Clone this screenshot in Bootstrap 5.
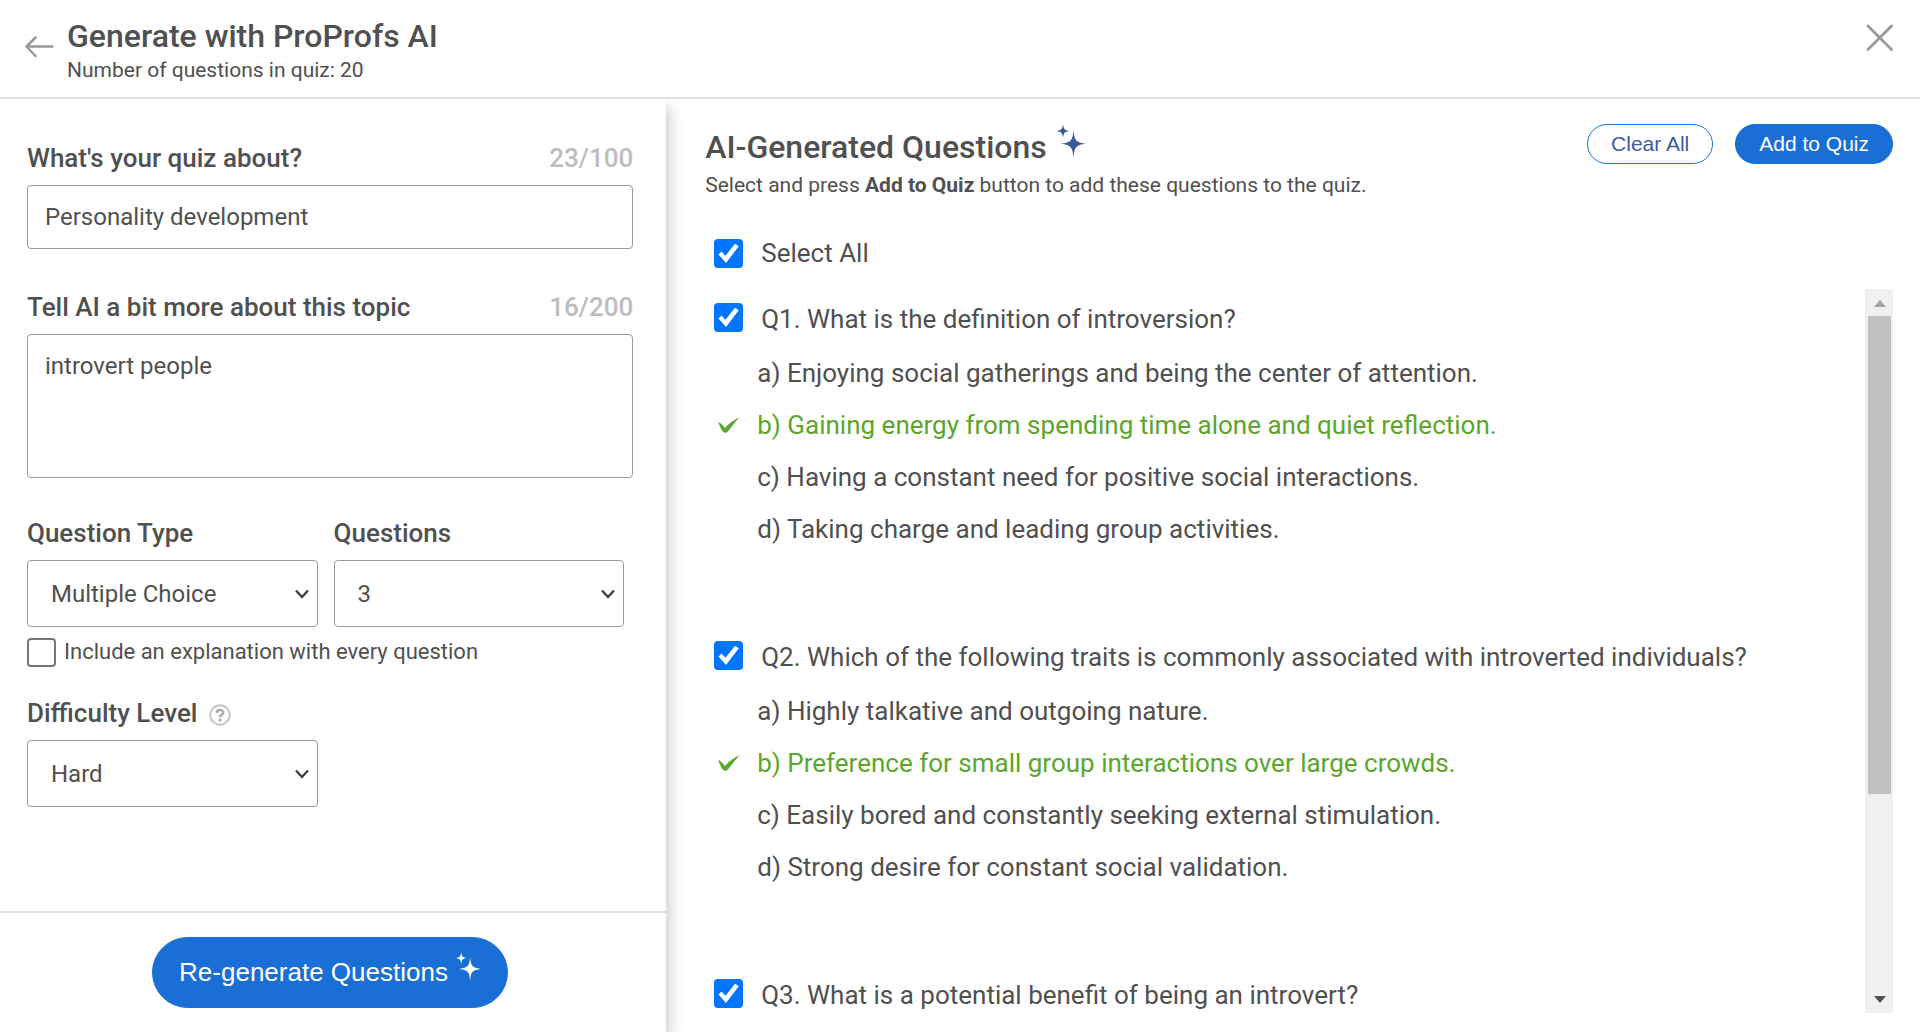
<!DOCTYPE html>
<html lang="en">
<head>
<meta charset="utf-8">
<meta name="viewport" content="width=device-width, initial-scale=1">
<title>Generate with ProProfs AI</title>
<link href="https://cdn.jsdelivr.net/npm/bootstrap@5.3.0/dist/css/bootstrap.min.css" rel="stylesheet">
<style>
  :root { --ink: #505050; --line: #e0e0e0; --edge: #999; --brand: #1a6fd6; --tick: #5ca62b; }
  body { font-family: Roboto, "Liberation Sans", sans-serif; color: var(--ink); background: #fff; }
  .top-bar { padding: 16px 27px 15px 24px; gap: 13px; border-bottom: 2px solid var(--line); height: 99px; }
  .page-title { font-size: 32px; line-height: 40px; font-weight: 500; }
  .sub-text { font-size: 21px; line-height: 28px; }
  .icon-btn { background: none; border: 0; padding: 0; line-height: 0; }
  .side-panel { width: 34.7%; box-shadow: 3px 8px 14px rgba(0,0,0,.22); }
  .side-form { padding: 44px 33px 0 27px; }
  .field-label, .counter { font-size: 26px; line-height: 30px; font-weight: 500; }
  .counter { color: #bdbdbd; }
  .label-row { margin-bottom: 12px; }
  .field { height: 64px; border: 1px solid var(--edge); border-radius: 4px; color: var(--ink); font-size: 24px; line-height: 30px; padding: 16px 17px; }
  .field.form-select { height: 67px; padding: 0 40px 0 23px;
    background: url("data:image/svg+xml,%3csvg xmlns='http://www.w3.org/2000/svg' viewBox='0 0 14 10'%3e%3cpath d='M1 1.5l6 6.5 6-6.5' fill='none' stroke='%23404040' stroke-width='2.4'/%3e%3c/svg%3e") no-repeat right 8px center / 14px 10px; }
  textarea.field { height: 144px; resize: none; }
  .form-block { margin-top: 43px; }
  .pair { display: grid; grid-template-columns: 1fr 1fr; column-gap: 16px; padding-right: 9px; }
  .explain-row { gap: 8px; margin-top: 10px; }
  .level-row { margin-top: 31px; }
  .tick { width: 29px; height: 29px; margin: 0; flex: none; border: 2px solid #767676; border-radius: 4px; }
  .tick:checked { background: #0075ff url("data:image/svg+xml,%3csvg xmlns='http://www.w3.org/2000/svg' viewBox='0 0 29 29'%3e%3cpath d='M4.500 15.500l3-3 4 4.300L21 4.800l3.800 2.400L12 24z' fill='%23fff'/%3e%3c/svg%3e") center / 100% 100%; background-origin: border-box; border-color: #0075ff; }
  .tick-label { font-size: 22px; line-height: 30px; }
  .side-foot { border-top: 2px solid var(--line); padding: 24px 33px 24px 27px; }
  .pill { font-family: "Liberation Sans", Arial, sans-serif; border-radius: 50px; border: 1px solid var(--brand); background: var(--brand); color: #fff; font-size: 21px; line-height: 38px; padding: 0 23px; }
  .pill-outline { background: #fff; color: #3f5a9d; }
  .pill-lg { font-size: 26px; line-height: 69px; padding: 0 26px; }
  .pill-lg svg { vertical-align: baseline; }
  .results { padding: 25px 27px 19px 39px; }
  .results-head { gap: 22px; }
  .results-title { gap: 9px; }
  .results-title span { padding-top: 3px; }
  .q-text { font-size: 26px; line-height: 32px; }
  .check-row { gap: 18px; padding-left: 9px; }
  .all-row { margin-top: 38px; }
  .q-scroll { margin-top: 20px; }
  .q-list { padding-top: 14px; }
  .q-item { margin-bottom: 86px; }
  .opts { margin: 12px 0 0; padding: 0 0 0 13px; }
  .opt { font-size: 26px; line-height: 52px; gap: 17px; }
  .opt-mark { width: 22px; flex: none; line-height: 0; }
  .opt.right { color: var(--tick); }
  .s-track { width: 28px; flex: none; background: #f0f0f0; padding: 11px 2px 10px 3px; }
  .s-thumb { height: 68%; background: #c1c1c1; margin: 9px 0 auto; }
</style>
</head>
<body>
<svg width="0" height="0" class="position-absolute" aria-hidden="true">
  <symbol id="sparkle" viewBox="0 0 30 34">
    <path d="M17.500 6C18.400 16 19.500 18.600 30 19.800C19.500 21 18.400 23.600 17.500 34C16.600 23.600 15.500 21 4.500 19.800C15.500 18.600 16.600 16 17.500 6Z"/>
    <path d="M7 0C7.700 5.300 8.500 6.300 13.500 7C8.500 7.700 7.700 8.700 7 14C6.300 8.700 5.500 7.700 0 7C5.500 6.300 6.300 5.300 7 0Z"/>
  </symbol>
  <symbol id="right-mark" viewBox="0 0 22 17">
    <path d="M.3 5C2.800 5.800 4.800 8.300 6.800 11C10.500 7 15.500 3 21.500 .3C17.500 4.500 14 9.500 9.800 14.600C8.600 16.200 5.900 16.200 4.900 14.800C3 12 1.300 8.500 .3 5Z"/>
  </symbol>
</svg>

<div class="vh-100 d-flex flex-column overflow-hidden">
  <header class="top-bar d-flex align-items-start">
    <button class="icon-btn mt-3 pt-1" type="button" aria-label="Back">
      <svg width="30" height="22" viewBox="0 0 30 22" fill="none" stroke="#999" stroke-width="2.500" stroke-linecap="round" stroke-linejoin="round"><path d="M11.500 1.500L2.500 10.500l9 9.500M2.500 10.500h26"/></svg>
    </button>
    <div class="flex-fill">
      <h1 class="page-title m-0">Generate with ProProfs AI</h1>
      <div class="sub-text">Number of questions in quiz: 20</div>
    </div>
    <button class="icon-btn mt-2" type="button" aria-label="Close">
      <svg width="27" height="27" viewBox="0 0 27 27" fill="none" stroke="#999" stroke-width="2.800" stroke-linecap="round"><path d="M2 2l23.500 23.500M25.500 2L2 25.500"/></svg>
    </button>
  </header>

  <div class="d-flex flex-fill overflow-hidden">
    <aside class="side-panel d-flex flex-column flex-shrink-0">
      <form class="side-form flex-fill">
        <div class="label-row d-flex justify-content-between">
          <label class="field-label" for="topic">What's your quiz about?</label><span class="counter">23/100</span>
        </div>
        <input id="topic" class="form-control field" type="text" value="Personality development">

        <div class="label-row form-block d-flex justify-content-between">
          <label class="field-label" for="more">Tell AI a bit more about this topic</label><span class="counter">16/200</span>
        </div>
        <textarea id="more" class="form-control field">introvert people</textarea>

        <div class="pair mt-4 pt-3">
          <div>
            <label class="field-label label-row d-block" for="kind">Question Type</label>
            <select id="kind" class="form-select field"><option>Multiple Choice</option></select>
          </div>
          <div>
            <label class="field-label label-row d-block" for="count">Questions</label>
            <select id="count" class="form-select field"><option>3</option></select>
          </div>
        </div>
        <div class="explain-row d-flex align-items-center">
          <input id="explain" class="form-check-input tick" type="checkbox">
          <label class="tick-label" for="explain">Include an explanation with every question</label>
        </div>

        <div class="pair level-row">
          <div>
            <div class="label-row d-flex align-items-center gap-2">
              <label class="field-label" for="level">Difficulty Level</label>
              <button class="icon-btn ms-1 pt-1" type="button" aria-label="About difficulty levels">
                <svg width="22" height="22" viewBox="0 0 22 22" fill="none"><circle cx="11" cy="11" r="9.700" stroke="#c3c7ca" stroke-width="2"/><path d="M7.800 8.900C7.800 5 14.200 5 14.200 8.700C14.200 10.900 11.100 10.800 11.100 13.200" stroke="#aaa" stroke-width="2.500"/><circle cx="11.100" cy="15.900" r="1.500" fill="#aaa"/></svg>
              </button>
            </div>
            <select id="level" class="form-select field"><option>Hard</option></select>
          </div>
        </div>
      </form>
      <div class="side-foot text-center">
        <button class="btn pill pill-lg" type="button">Re-generate Questions
          <svg width="26" height="29" fill="#fff" aria-hidden="true"><use href="#sparkle"/></svg></button>
      </div>
    </aside>

    <main class="results flex-fill d-flex flex-column overflow-hidden">
      <div class="results-head d-flex align-items-start">
        <div class="flex-fill">
          <h2 class="page-title results-title m-0 d-flex"><span>AI-Generated Questions</span>
            <svg width="30" height="34" fill="#3b5998" aria-hidden="true"><use href="#sparkle"/></svg></h2>
          <div class="sub-text mt-1">Select and press <strong>Add to Quiz</strong> button to add these questions to the quiz.</div>
        </div>
        <button class="btn pill pill-outline" type="button">Clear All</button>
        <button class="btn pill" type="button">Add to Quiz</button>
      </div>

      <div class="check-row all-row d-flex align-items-center">
        <input id="all" class="form-check-input tick" type="checkbox" checked>
        <label class="q-text" for="all">Select All</label>
      </div>

      <div class="q-scroll d-flex flex-fill overflow-hidden">
        <div class="q-list flex-fill overflow-hidden">
          <section class="q-item">
            <div class="check-row d-flex">
              <input id="q1" class="form-check-input tick" type="checkbox" checked>
              <label class="q-text" for="q1">Q1. What is the definition of introversion?</label>
            </div>
            <ul class="opts list-unstyled">
              <li class="opt d-flex"><span class="opt-mark"></span>a) Enjoying social gatherings and being the center of attention.</li>
              <li class="opt right d-flex align-items-center"><span class="opt-mark"><svg width="22" height="17" fill="currentColor" aria-label="Correct"><use href="#right-mark"/></svg></span>b) Gaining energy from spending time alone and quiet reflection.</li>
              <li class="opt d-flex"><span class="opt-mark"></span>c) Having a constant need for positive social interactions.</li>
              <li class="opt d-flex"><span class="opt-mark"></span>d) Taking charge and leading group activities.</li>
            </ul>
          </section>
          <section class="q-item">
            <div class="check-row d-flex">
              <input id="q2" class="form-check-input tick" type="checkbox" checked>
              <label class="q-text" for="q2">Q2. Which of the following traits is commonly associated with introverted individuals?</label>
            </div>
            <ul class="opts list-unstyled">
              <li class="opt d-flex"><span class="opt-mark"></span>a) Highly talkative and outgoing nature.</li>
              <li class="opt right d-flex align-items-center"><span class="opt-mark"><svg width="22" height="17" fill="currentColor" aria-label="Correct"><use href="#right-mark"/></svg></span>b) Preference for small group interactions over large crowds.</li>
              <li class="opt d-flex"><span class="opt-mark"></span>c) Easily bored and constantly seeking external stimulation.</li>
              <li class="opt d-flex"><span class="opt-mark"></span>d) Strong desire for constant social validation.</li>
            </ul>
          </section>
          <section>
            <div class="check-row d-flex">
              <input id="q3" class="form-check-input tick" type="checkbox" checked>
              <label class="q-text" for="q3">Q3. What is a potential benefit of being an introvert?</label>
            </div>
          </section>
        </div>
        <div class="s-track d-flex flex-column" aria-hidden="true">
          <svg class="mx-auto flex-shrink-0" width="12" height="7" fill="#a3a3a3"><path d="M0 7L6 0l6 7z"/></svg>
          <div class="s-thumb w-100"></div>
          <svg class="mx-auto flex-shrink-0" width="12" height="7" fill="#505050"><path d="M0 0h12L6 7z"/></svg>
        </div>
      </div>
    </main>
  </div>
</div>
<script src="https://cdn.jsdelivr.net/npm/bootstrap@5.3.0/dist/js/bootstrap.bundle.min.js"></script>
</body>
</html>
